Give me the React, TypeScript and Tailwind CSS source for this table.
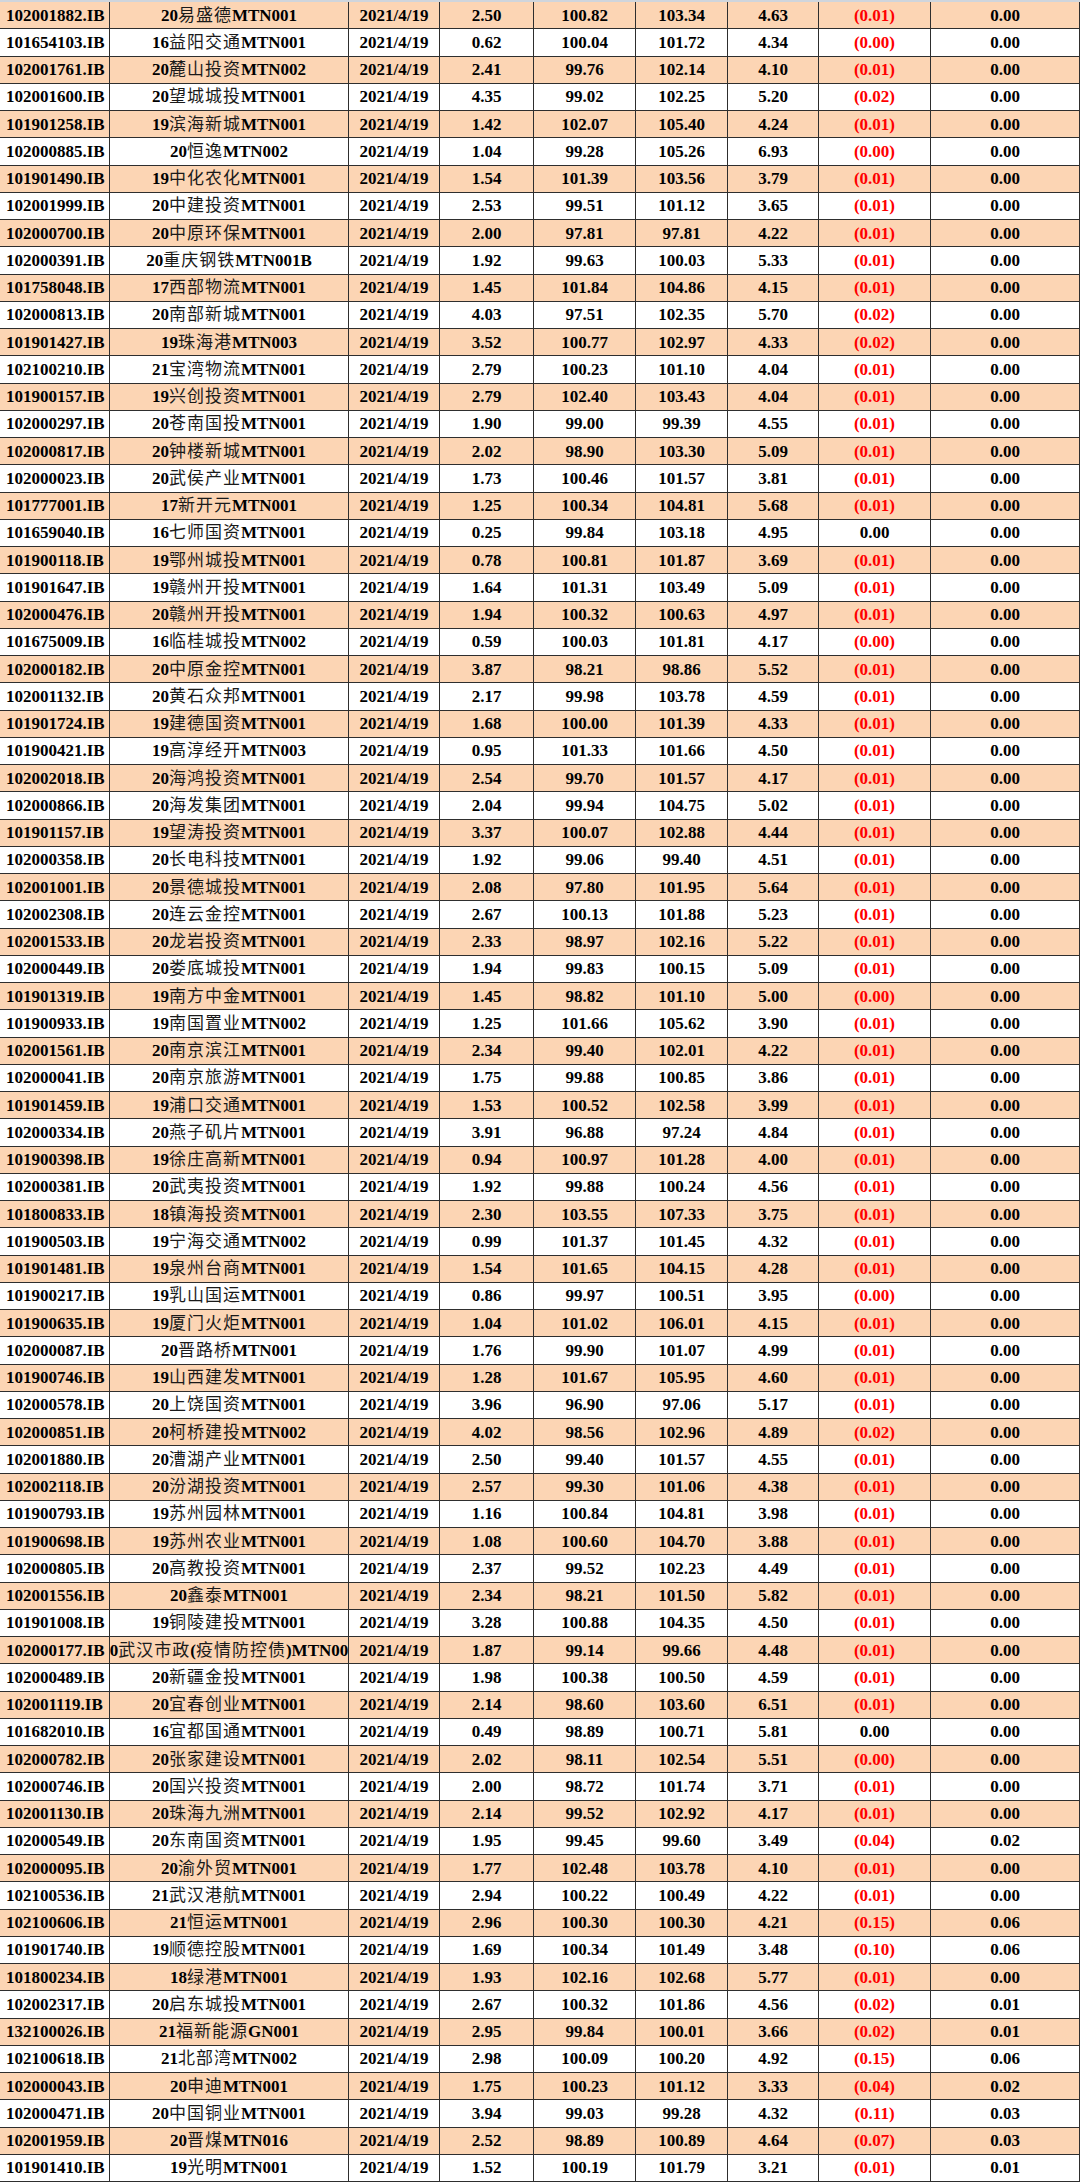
import React from "react";

type Row = [string, string, string, string, string, string, string, string];

const DATA: Row[] = [
  ["102001882.IB", "20易盛德MTN001", "2.50", "100.82", "103.34", "4.63", "(0.01)", "0.00"],
  ["101654103.IB", "16益阳交通MTN001", "0.62", "100.04", "101.72", "4.34", "(0.00)", "0.00"],
  ["102001761.IB", "20麓山投资MTN002", "2.41", "99.76", "102.14", "4.10", "(0.01)", "0.00"],
  ["102001600.IB", "20望城城投MTN001", "4.35", "99.02", "102.25", "5.20", "(0.02)", "0.00"],
  ["101901258.IB", "19滨海新城MTN001", "1.42", "102.07", "105.40", "4.24", "(0.01)", "0.00"],
  ["102000885.IB", "20恒逸MTN002", "1.04", "99.28", "105.26", "6.93", "(0.00)", "0.00"],
  ["101901490.IB", "19中化农化MTN001", "1.54", "101.39", "103.56", "3.79", "(0.01)", "0.00"],
  ["102001999.IB", "20中建投资MTN001", "2.53", "99.51", "101.12", "3.65", "(0.01)", "0.00"],
  ["102000700.IB", "20中原环保MTN001", "2.00", "97.81", "97.81", "4.22", "(0.01)", "0.00"],
  ["102000391.IB", "20重庆钢铁MTN001B", "1.92", "99.63", "100.03", "5.33", "(0.01)", "0.00"],
  ["101758048.IB", "17西部物流MTN001", "1.45", "101.84", "104.86", "4.15", "(0.01)", "0.00"],
  ["102000813.IB", "20南部新城MTN001", "4.03", "97.51", "102.35", "5.70", "(0.02)", "0.00"],
  ["101901427.IB", "19珠海港MTN003", "3.52", "100.77", "102.97", "4.33", "(0.02)", "0.00"],
  ["102100210.IB", "21宝湾物流MTN001", "2.79", "100.23", "101.10", "4.04", "(0.01)", "0.00"],
  ["101900157.IB", "19兴创投资MTN001", "2.79", "102.40", "103.43", "4.04", "(0.01)", "0.00"],
  ["102000297.IB", "20苍南国投MTN001", "1.90", "99.00", "99.39", "4.55", "(0.01)", "0.00"],
  ["102000817.IB", "20钟楼新城MTN001", "2.02", "98.90", "103.30", "5.09", "(0.01)", "0.00"],
  ["102000023.IB", "20武侯产业MTN001", "1.73", "100.46", "101.57", "3.81", "(0.01)", "0.00"],
  ["101777001.IB", "17新开元MTN001", "1.25", "100.34", "104.81", "5.68", "(0.01)", "0.00"],
  ["101659040.IB", "16七师国资MTN001", "0.25", "99.84", "103.18", "4.95", "0.00", "0.00"],
  ["101900118.IB", "19鄂州城投MTN001", "0.78", "100.81", "101.87", "3.69", "(0.01)", "0.00"],
  ["101901647.IB", "19赣州开投MTN001", "1.64", "101.31", "103.49", "5.09", "(0.01)", "0.00"],
  ["102000476.IB", "20赣州开投MTN001", "1.94", "100.32", "100.63", "4.97", "(0.01)", "0.00"],
  ["101675009.IB", "16临桂城投MTN002", "0.59", "100.03", "101.81", "4.17", "(0.00)", "0.00"],
  ["102000182.IB", "20中原金控MTN001", "3.87", "98.21", "98.86", "5.52", "(0.01)", "0.00"],
  ["102001132.IB", "20黄石众邦MTN001", "2.17", "99.98", "103.78", "4.59", "(0.01)", "0.00"],
  ["101901724.IB", "19建德国资MTN001", "1.68", "100.00", "101.39", "4.33", "(0.01)", "0.00"],
  ["101900421.IB", "19高淳经开MTN003", "0.95", "101.33", "101.66", "4.50", "(0.01)", "0.00"],
  ["102002018.IB", "20海鸿投资MTN001", "2.54", "99.70", "101.57", "4.17", "(0.01)", "0.00"],
  ["102000866.IB", "20海发集团MTN001", "2.04", "99.94", "104.75", "5.02", "(0.01)", "0.00"],
  ["101901157.IB", "19望涛投资MTN001", "3.37", "100.07", "102.88", "4.44", "(0.01)", "0.00"],
  ["102000358.IB", "20长电科技MTN001", "1.92", "99.06", "99.40", "4.51", "(0.01)", "0.00"],
  ["102001001.IB", "20景德城投MTN001", "2.08", "97.80", "101.95", "5.64", "(0.01)", "0.00"],
  ["102002308.IB", "20连云金控MTN001", "2.67", "100.13", "101.88", "5.23", "(0.01)", "0.00"],
  ["102001533.IB", "20龙岩投资MTN001", "2.33", "98.97", "102.16", "5.22", "(0.01)", "0.00"],
  ["102000449.IB", "20娄底城投MTN001", "1.94", "99.83", "100.15", "5.09", "(0.01)", "0.00"],
  ["101901319.IB", "19南方中金MTN001", "1.45", "98.82", "101.10", "5.00", "(0.00)", "0.00"],
  ["101900933.IB", "19南国置业MTN002", "1.25", "101.66", "105.62", "3.90", "(0.01)", "0.00"],
  ["102001561.IB", "20南京滨江MTN001", "2.34", "99.40", "102.01", "4.22", "(0.01)", "0.00"],
  ["102000041.IB", "20南京旅游MTN001", "1.75", "99.88", "100.85", "3.86", "(0.01)", "0.00"],
  ["101901459.IB", "19浦口交通MTN001", "1.53", "100.52", "102.58", "3.99", "(0.01)", "0.00"],
  ["102000334.IB", "20燕子矶片MTN001", "3.91", "96.88", "97.24", "4.84", "(0.01)", "0.00"],
  ["101900398.IB", "19徐庄高新MTN001", "0.94", "100.97", "101.28", "4.00", "(0.01)", "0.00"],
  ["102000381.IB", "20武夷投资MTN001", "1.92", "99.88", "100.24", "4.56", "(0.01)", "0.00"],
  ["101800833.IB", "18镇海投资MTN001", "2.30", "103.55", "107.33", "3.75", "(0.01)", "0.00"],
  ["101900503.IB", "19宁海交通MTN002", "0.99", "101.37", "101.45", "4.32", "(0.01)", "0.00"],
  ["101901481.IB", "19泉州台商MTN001", "1.54", "101.65", "104.15", "4.28", "(0.01)", "0.00"],
  ["101900217.IB", "19乳山国运MTN001", "0.86", "99.97", "100.51", "3.95", "(0.00)", "0.00"],
  ["101900635.IB", "19厦门火炬MTN001", "1.04", "101.02", "106.01", "4.15", "(0.01)", "0.00"],
  ["102000087.IB", "20晋路桥MTN001", "1.76", "99.90", "101.07", "4.99", "(0.01)", "0.00"],
  ["101900746.IB", "19山西建发MTN001", "1.28", "101.67", "105.95", "4.60", "(0.01)", "0.00"],
  ["102000578.IB", "20上饶国资MTN001", "3.96", "96.90", "97.06", "5.17", "(0.01)", "0.00"],
  ["102000851.IB", "20柯桥建投MTN002", "4.02", "98.56", "102.96", "4.89", "(0.02)", "0.00"],
  ["102001880.IB", "20漕湖产业MTN001", "2.50", "99.40", "101.57", "4.55", "(0.01)", "0.00"],
  ["102002118.IB", "20汾湖投资MTN001", "2.57", "99.30", "101.06", "4.38", "(0.01)", "0.00"],
  ["101900793.IB", "19苏州园林MTN001", "1.16", "100.84", "104.81", "3.98", "(0.01)", "0.00"],
  ["101900698.IB", "19苏州农业MTN001", "1.08", "100.60", "104.70", "3.88", "(0.01)", "0.00"],
  ["102000805.IB", "20高教投资MTN001", "2.37", "99.52", "102.23", "4.49", "(0.01)", "0.00"],
  ["102001556.IB", "20鑫泰MTN001", "2.34", "98.21", "101.50", "5.82", "(0.01)", "0.00"],
  ["101901008.IB", "19铜陵建投MTN001", "3.28", "100.88", "104.35", "4.50", "(0.01)", "0.00"],
  ["102000177.IB", "20武汉市政(疫情防控债)MTN001", "1.87", "99.14", "99.66", "4.48", "(0.01)", "0.00"],
  ["102000489.IB", "20新疆金投MTN001", "1.98", "100.38", "100.50", "4.59", "(0.01)", "0.00"],
  ["102001119.IB", "20宜春创业MTN001", "2.14", "98.60", "103.60", "6.51", "(0.01)", "0.00"],
  ["101682010.IB", "16宜都国通MTN001", "0.49", "98.89", "100.71", "5.81", "0.00", "0.00"],
  ["102000782.IB", "20张家建设MTN001", "2.02", "98.11", "102.54", "5.51", "(0.00)", "0.00"],
  ["102000746.IB", "20国兴投资MTN001", "2.00", "98.72", "101.74", "3.71", "(0.01)", "0.00"],
  ["102001130.IB", "20珠海九洲MTN001", "2.14", "99.52", "102.92", "4.17", "(0.01)", "0.00"],
  ["102000549.IB", "20东南国资MTN001", "1.95", "99.45", "99.60", "3.49", "(0.04)", "0.02"],
  ["102000095.IB", "20渝外贸MTN001", "1.77", "102.48", "103.78", "4.10", "(0.01)", "0.00"],
  ["102100536.IB", "21武汉港航MTN001", "2.94", "100.22", "100.49", "4.22", "(0.01)", "0.00"],
  ["102100606.IB", "21恒运MTN001", "2.96", "100.30", "100.30", "4.21", "(0.15)", "0.06"],
  ["101901740.IB", "19顺德控股MTN001", "1.69", "100.34", "101.49", "3.48", "(0.10)", "0.06"],
  ["101800234.IB", "18绿港MTN001", "1.93", "102.16", "102.68", "5.77", "(0.01)", "0.00"],
  ["102002317.IB", "20启东城投MTN001", "2.67", "100.32", "101.86", "4.56", "(0.02)", "0.01"],
  ["132100026.IB", "21福新能源GN001", "2.95", "99.84", "100.01", "3.66", "(0.02)", "0.01"],
  ["102100618.IB", "21北部湾MTN002", "2.98", "100.09", "100.20", "4.92", "(0.15)", "0.06"],
  ["102000043.IB", "20申迪MTN001", "1.75", "100.23", "101.12", "3.33", "(0.04)", "0.02"],
  ["102000471.IB", "20中国铜业MTN001", "3.94", "99.03", "99.28", "4.32", "(0.11)", "0.03"],
  ["102001959.IB", "20晋煤MTN016", "2.52", "98.89", "100.89", "4.64", "(0.07)", "0.03"],
  ["101901410.IB", "19光明MTN001", "1.52", "100.19", "101.79", "3.21", "(0.01)", "0.01"],
];

function Name({ text }: { text: string }) {
  const parts = text.split(/([\u4e00-\u9fff]+)/).filter((p) => p.length > 0);
  return (
    <span className="whitespace-nowrap">
      {parts.map((p, i) =>
        /[\u4e00-\u9fff]/.test(p) ? (
          <span key={i} className="font-normal text-[#1a1a1a] tracking-[1px]">
            {p}
          </span>
        ) : (
          <span key={i}>{p}</span>
        )
      )}
    </span>
  );
}

const cell =
  "flex items-center justify-center overflow-hidden whitespace-nowrap border-r border-b border-[#2e2e2e]";

export default function App() {
  return (
    <div className="w-[1080px] h-[2182px] overflow-hidden bg-white border-t-2 border-[#cfd5dc] [font-family:'Liberation_Serif','Noto_Sans_CJK_SC',serif] text-[17px] font-bold text-black leading-none">
      {DATA.map((r, idx) => {
        const bg = idx % 2 === 0 ? "bg-[#fcd5b4]" : "bg-white";
        const neg = r[6].startsWith("(");
        return (
          <div
            key={r[0] + idx}
            className={`grid grid-cols-[110px_239px_91px_94px_102px_92px_91px_112px_149px] h-[27.25px] ${bg}`}
          >
            <div className="flex items-center justify-start overflow-hidden whitespace-nowrap border-r border-b border-[#2e2e2e] pl-[6px]">
              {r[0]}
            </div>
            <div className={cell}>
              <Name text={r[1]} />
            </div>
            <div className={cell}>2021/4/19</div>
            <div className={cell}>{r[2]}</div>
            <div className={cell}>{r[3]}</div>
            <div className={cell}>{r[4]}</div>
            <div className={cell}>{r[5]}</div>
            <div className={`${cell} ${neg ? "text-[#ff0000]" : "text-black"}`}>{r[6]}</div>
            <div className={cell}>{r[7]}</div>
          </div>
        );
      })}
    </div>
  );
}
